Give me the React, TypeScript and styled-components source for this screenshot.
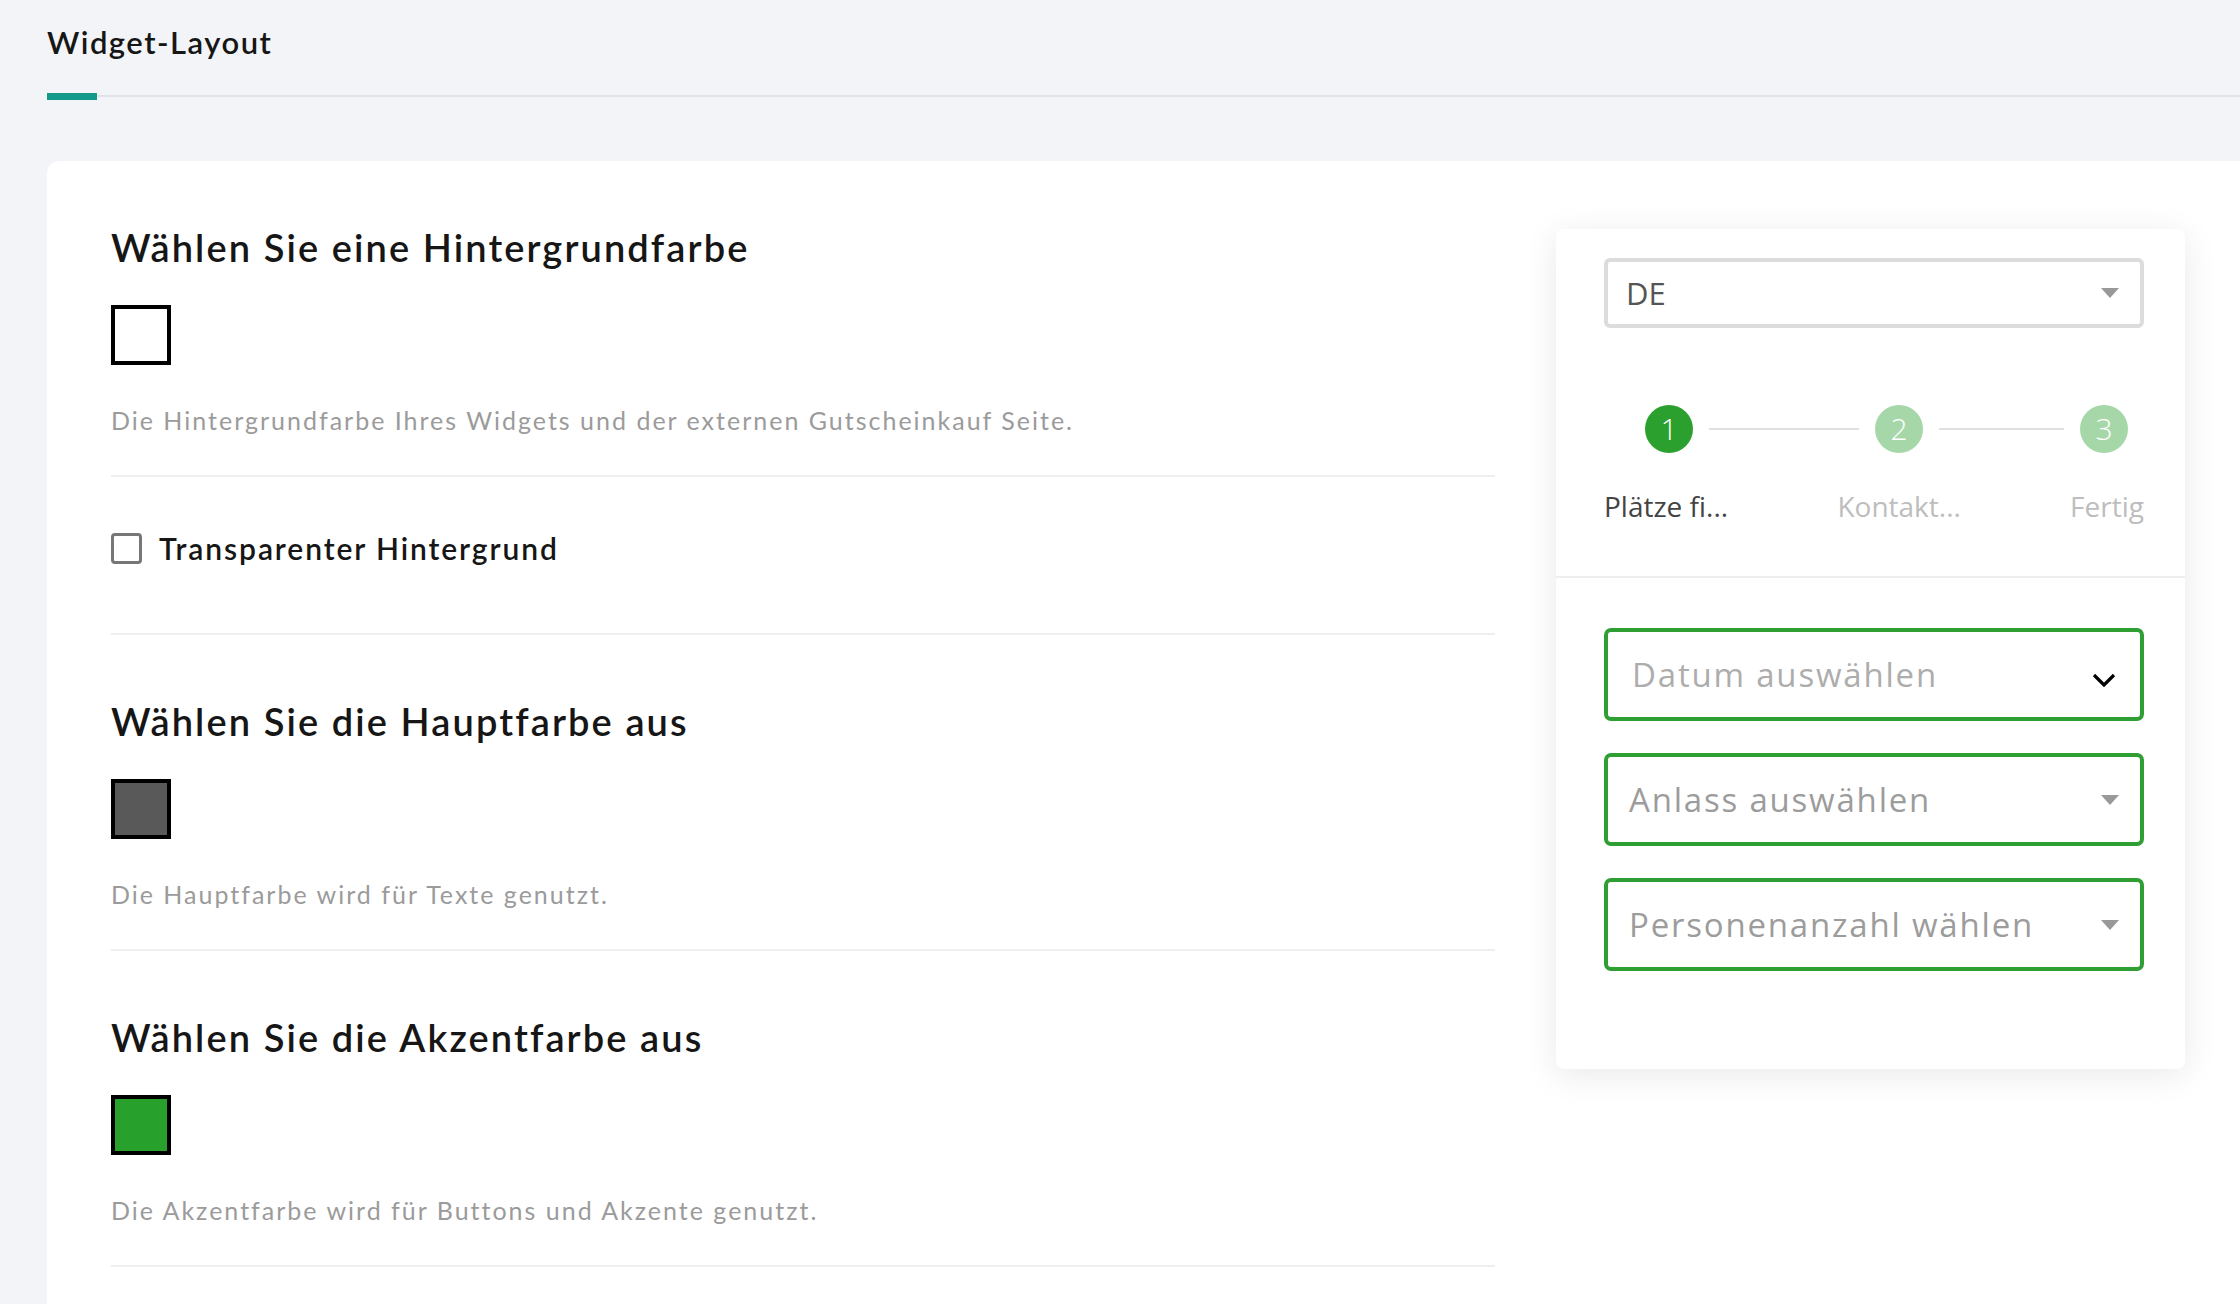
import styled, { createGlobalStyle } from "styled-components";

const GlobalStyle = createGlobalStyle`
  html, body {
    margin: 0;
    padding: 0;
    background: #f3f4f8;
  }
  body {
    font-family: "Lato", "Noto Sans", sans-serif;
    color: #1a1a1a;
    overflow: hidden;
  }
  * {
    box-sizing: border-box;
  }
`;

const Page = styled.div`
  width: 2240px;
  height: 1304px;
  padding-left: 47px;
  overflow: hidden;
`;

const TabBar = styled.div`
  position: relative;
  display: flex;
  padding-top: 23px;
  padding-bottom: 34px;
  border-bottom: 2px solid #e2e3e8;
`;

const Tab = styled.div`
  font-size: 31px;
  line-height: 38px;
  font-weight: 600;
  letter-spacing: 1.5px;
  color: #161616;
`;

const TabIndicator = styled.span`
  position: absolute;
  left: 0;
  bottom: -5px;
  width: 50px;
  height: 7px;
  background: #139a8a;
`;

const Card = styled.div`
  margin-top: 64px;
  background: #ffffff;
  border-radius: 12px 0 0 0;
  display: flex;
  align-items: flex-start;
  gap: 61px;
  padding-left: 64px;
  min-height: 1200px;
`;

const Settings = styled.div`
  width: 1384px;
  display: flex;
  flex-direction: column;
`;

const Section = styled.section`
  display: flex;
  flex-direction: column;
  align-items: flex-start;
  padding: 63px 0 37px;
  border-bottom: 2px solid #efefef;
`;

const Heading = styled.h2`
  margin: 0;
  font-size: 38px;
  line-height: 46px;
  font-weight: 600;
  letter-spacing: 2.1px;
  color: #161616;
`;

const Swatch = styled.div<{ $color: string }>`
  margin-top: 35px;
  width: 60px;
  height: 60px;
  border: 4px solid #000;
  background: ${(p) => p.$color};
`;

const Description = styled.p`
  margin: 37px 0 0;
  font-size: 25px;
  line-height: 36px;
  letter-spacing: 2px;
  color: #9b9b9b;
`;

const CheckSection = styled.section`
  padding: 56px 0 69px;
  border-bottom: 2px solid #efefef;
`;

const CheckRow = styled.label`
  display: flex;
  align-items: center;
  gap: 17px;
  height: 31px;
`;

const CheckBox = styled.span`
  width: 31px;
  height: 31px;
  border: 3px solid #777;
  border-radius: 4px;
  background: #fff;
`;

const CheckLabel = styled.span`
  font-size: 30px;
  line-height: 31px;
  font-weight: 600;
  letter-spacing: 1.9px;
  color: #161616;
`;

const Widget = styled.div`
  margin-top: 68px;
  width: 629px;
  background: #fff;
  border-radius: 8px;
  box-shadow: 0 6px 34px rgba(0, 0, 0, 0.09);
  font-family: "Open Sans", "Noto Sans", sans-serif;
`;

const WidgetTop = styled.div`
  padding: 29px 41px 51px 48px;
  border-bottom: 2px solid #eeeeee;
`;

const LangSelect = styled.div`
  height: 70px;
  display: flex;
  align-items: center;
  justify-content: space-between;
  padding: 0 21px 0 18px;
  border: 4px solid #dcdcdc;
  border-radius: 6px;
  font-size: 31px;
  color: #555;
`;

const Caret = styled.span`
  width: 0;
  height: 0;
  border-left: 9px solid transparent;
  border-right: 9px solid transparent;
  border-top: 10px solid #999;
`;

const CircleRow = styled.div`
  margin-top: 77px;
  display: flex;
  align-items: center;
  padding: 0 16px 0 41px;
`;

const StepCircle = styled.div<{ $active?: boolean }>`
  flex: none;
  width: 48px;
  height: 48px;
  border-radius: 50%;
  display: flex;
  align-items: center;
  justify-content: center;
  background: ${(p) => (p.$active ? "#2ca02f" : "#a6d7a8")};
  color: #fff;
  font-size: 30px;
  font-weight: 300;
  line-height: 1;
`;

const Connector = styled.div<{ $grow: number }>`
  flex: ${(p) => p.$grow};
  height: 2px;
  margin: 0 16px;
  background: #e0e0e0;
`;

const LabelRow = styled.div`
  margin-top: 34px;
  display: flex;
  justify-content: space-between;
`;

const StepLabel = styled.span<{ $active?: boolean }>`
  font-size: 28px;
  line-height: 38px;
  color: ${(p) => (p.$active ? "#444" : "#bdbdbd")};
`;

const Fields = styled.div`
  padding: 50px 41px 98px 48px;
  display: flex;
  flex-direction: column;
  gap: 32px;
`;

const Field = styled.div<{ $inset: number }>`
  height: 93px;
  display: flex;
  align-items: center;
  justify-content: space-between;
  padding: 0 ${(p) => p.$inset}px 0 21px;
  border: 4px solid #2f9e33;
  border-radius: 7px;
`;

const Placeholder = styled.span<{ $light?: boolean }>`
  font-size: 33px;
  letter-spacing: 1.8px;
  color: ${(p) => (p.$light ? "#adadad" : "#9c9c9c")};
  padding-left: ${(p) => (p.$light ? 3 : 0)}px;
`;

const Chevron = () => (
  <svg width="24" height="16" viewBox="0 0 24 16" style={{ marginTop: 10 }}>
    <path d="M2 3 L12 13 L22 3" fill="none" stroke="#000" strokeWidth="3.2" />
  </svg>
);

const sections = [
  {
    title: "Wählen Sie die Hauptfarbe aus",
    color: "#595959",
    text: "Die Hauptfarbe wird für Texte genutzt.",
  },
  {
    title: "Wählen Sie die Akzentfarbe aus",
    color: "#27a12b",
    text: "Die Akzentfarbe wird für Buttons und Akzente genutzt.",
  },
];

function App() {
  return (
    <Page>
      <GlobalStyle />
      <TabBar>
        <Tab>Widget-Layout</Tab>
        <TabIndicator />
      </TabBar>
      <Card>
        <Settings>
          <Section>
            <Heading>Wählen Sie eine Hintergrundfarbe</Heading>
            <Swatch $color="#ffffff" />
            <Description>
              Die Hintergrundfarbe Ihres Widgets und der externen Gutscheinkauf Seite.
            </Description>
          </Section>
          <CheckSection>
            <CheckRow>
              <CheckBox />
              <CheckLabel>Transparenter Hintergrund</CheckLabel>
            </CheckRow>
          </CheckSection>
          {sections.map((s) => (
            <Section key={s.title}>
              <Heading>{s.title}</Heading>
              <Swatch $color={s.color} />
              <Description>{s.text}</Description>
            </Section>
          ))}
        </Settings>
        <Widget>
          <WidgetTop>
            <LangSelect>
              DE
              <Caret />
            </LangSelect>
            <CircleRow>
              <StepCircle $active>1</StepCircle>
              <Connector $grow={6} />
              <StepCircle>2</StepCircle>
              <Connector $grow={5} />
              <StepCircle>3</StepCircle>
            </CircleRow>
            <LabelRow>
              <StepLabel $active>Plätze fi...</StepLabel>
              <StepLabel>Kontakt...</StepLabel>
              <StepLabel>Fertig</StepLabel>
            </LabelRow>
          </WidgetTop>
          <Fields>
            <Field $inset={24}>
              <Placeholder $light>Datum auswählen</Placeholder>
              <Chevron />
            </Field>
            <Field $inset={21}>
              <Placeholder>Anlass auswählen</Placeholder>
              <Caret />
            </Field>
            <Field $inset={21}>
              <Placeholder>Personenanzahl wählen</Placeholder>
              <Caret />
            </Field>
          </Fields>
        </Widget>
      </Card>
    </Page>
  );
}

export default App;
